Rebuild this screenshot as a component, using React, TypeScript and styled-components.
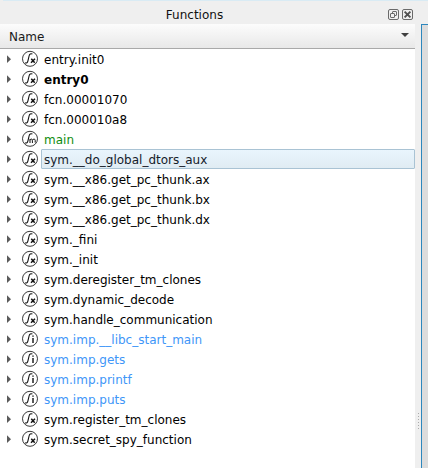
import React from "react";
import styled, { createGlobalStyle } from "styled-components";

const GlobalStyle = createGlobalStyle`
  * { box-sizing: border-box; }
  html, body { margin: 0; padding: 0; overflow: hidden; background: #efefef; }
  body { font: 12px/20px "DejaVu Sans", sans-serif; color: #000; }
`;

const Window = styled.div`
  display: grid;
  grid-template-columns: 415px 6px 1fr;
  grid-template-rows: 24px 1fr;
  width: 428px;
  height: 468px;
  background: #efefef;
`;

const TitleBar = styled.header`
  grid-column: 1 / -1;
  display: grid;
  grid-template-columns: 386px auto;
  align-items: center;
  padding-top: 5px;
  background: linear-gradient(#d9ebf4, #d9ebf4) 3px 0 / 100% 1px no-repeat;
`;

const Title = styled.h1`
  margin: 0;
  padding-left: 3px;
  font-size: 12px;
  font-weight: 400;
  line-height: 18px;
  text-align: center;
  color: #111;
`;

const DockButtons = styled.div`
  display: flex;
  gap: 3px;
  padding-left: 2px;
  svg { display: block; }
`;

const Panel = styled.main`
  background: #fff;
`;

const ColumnHeader = styled.div`
  display: flex;
  justify-content: space-between;
  height: 25px;
  padding: 3px 6px 0 9px;
  border-bottom: 1px solid #a9a9a9;
  background: linear-gradient(#fcfcfc, #e8e8e8);
  color: #1a1a1a;
  svg { display: block; margin-top: 5px; }
`;

const Splitter = styled.div`
  display: flex;
  flex-direction: column;
  align-items: center;
  gap: 2px;
  padding-top: 389px;
`;

const Grip = styled.i`
  width: 1px;
  height: 1px;
  background: #aaa;
`;

const Neighbour = styled.aside`
  border-left: 1px solid #2d87bd;
  border-top: 1px solid #2d87bd;
  background: #dcdcdc;
`;

const List = styled.ul`
  margin: 0;
  padding: 0;
  list-style: none;
`;

const Row = styled.li`
  display: grid;
  grid-template-columns: 22px 19px 1fr;
  height: 20px;
  svg { display: block; }
`;

const Arrow = styled.svg`
  margin: 6px 0 0 7px;
`;

type Tone = "normal" | "main" | "import";
const tones: Record<Tone, string> = { normal: "#000", main: "#0f8c0f", import: "#4096f8" };

const Label = styled.span<{ $tone: Tone; $bold?: boolean; $selected?: boolean }>`
  height: 20px;
  padding-left: 2px;
  border: 1px solid ${(p) => (p.$selected ? "#a9c3d4" : "transparent")};
  border-radius: 1px;
  background: ${(p) => (p.$selected ? "linear-gradient(#e9f5fd, #e0ecf3)" : "none")};
  color: ${(p) => (p.$selected ? "#14202a" : tones[p.$tone])};
  font-weight: ${(p) => (p.$bold ? 700 : 400)};
  line-height: 20px;
  white-space: nowrap;
`;

type Kind = "x" | "m" | "i";

function FunctionIcon({ kind }: { kind: Kind }) {
  return (
    <svg width="17" height="18" viewBox="0 0 17 18" fill="none" stroke="#111">
      <circle cx="8" cy="9.8" r="7.5" strokeWidth=".9" stroke="#222" />
      <path d="M3 13.8c1.7.7 2.5-.2 2.9-1.8l1.2-5.2C7.6 4.9 8.6 4.3 10.4 5.1" strokeWidth="1.05" />
      {kind === "x" && <path d="M9.3 9.8l3.4 4M13 9.8l-4 4" strokeWidth="1.5" />}
      {kind === "m" && (
        <path d="M8 14V9.9M8 11.2c.8-1.5 2.4-1.5 2.4.1V14M10.4 11.2c.8-1.5 2.8-1.5 2.8.1v2.3" strokeWidth="1" />
      )}
      {kind === "i" && <path d="M11 9v5M11 6.4v1.4" strokeWidth="1.4" />}
    </svg>
  );
}

interface Fn { name: string; kind?: Kind; tone?: Tone; bold?: boolean; selected?: boolean }

const functions: Fn[] = [
  { name: "entry.init0" },
  { name: "entry0", bold: true },
  { name: "fcn.00001070" },
  { name: "fcn.000010a8" },
  { name: "main", kind: "m", tone: "main" },
  { name: "sym.__do_global_dtors_aux", selected: true },
  { name: "sym.__x86.get_pc_thunk.ax" },
  { name: "sym.__x86.get_pc_thunk.bx" },
  { name: "sym.__x86.get_pc_thunk.dx" },
  { name: "sym._fini" },
  { name: "sym._init" },
  { name: "sym.deregister_tm_clones" },
  { name: "sym.dynamic_decode" },
  { name: "sym.handle_communication" },
  { name: "sym.imp.__libc_start_main", kind: "i", tone: "import" },
  { name: "sym.imp.gets", kind: "i", tone: "import" },
  { name: "sym.imp.printf", kind: "i", tone: "import" },
  { name: "sym.imp.puts", kind: "i", tone: "import" },
  { name: "sym.register_tm_clones" },
  { name: "sym.secret_spy_function" },
];

export default function App() {
  return (
    <>
      <GlobalStyle />
      <Window>
        <TitleBar>
          <Title>Functions</Title>
          <DockButtons>
            <svg width="11" height="11" fill="none" stroke="#6a6a6a">
              <rect x=".5" y=".5" width="10" height="10" rx="1.5" />
              <rect x="4.5" y="2.5" width="4" height="4" rx=".5" />
              <rect x="2.5" y="4.5" width="4" height="4" rx=".5" fill="#efefef" />
            </svg>
            <svg width="11" height="11" fill="none" stroke="#6a6a6a">
              <rect x=".5" y=".5" width="10" height="10" rx="1.5" />
              <path d="M2.6 2.6l5.8 5.8M8.4 2.6L2.6 8.4" strokeWidth="1.9" stroke="#505050" />
            </svg>
          </DockButtons>
        </TitleBar>
        <Panel>
          <ColumnHeader>
            <span>Name</span>
            <svg width="8" height="5"><path d="M0 1h8L4 5z" fill="#404040" /></svg>
          </ColumnHeader>
          <List>
            {functions.map((f) => (
              <Row key={f.name}>
                <Arrow width="5" height="9"><path d="M0 .3l4 3.9L0 8.1z" fill="#5a5a5a" /></Arrow>
                <FunctionIcon kind={f.kind ?? "x"} />
                <Label $tone={f.tone ?? "normal"} $bold={f.bold} $selected={f.selected}>{f.name}</Label>
              </Row>
            ))}
          </List>
        </Panel>
        <Splitter>
          {[0, 1, 2, 3, 4, 5].map((n) => <Grip key={n} />)}
        </Splitter>
        <Neighbour />
      </Window>
    </>
  );
}
